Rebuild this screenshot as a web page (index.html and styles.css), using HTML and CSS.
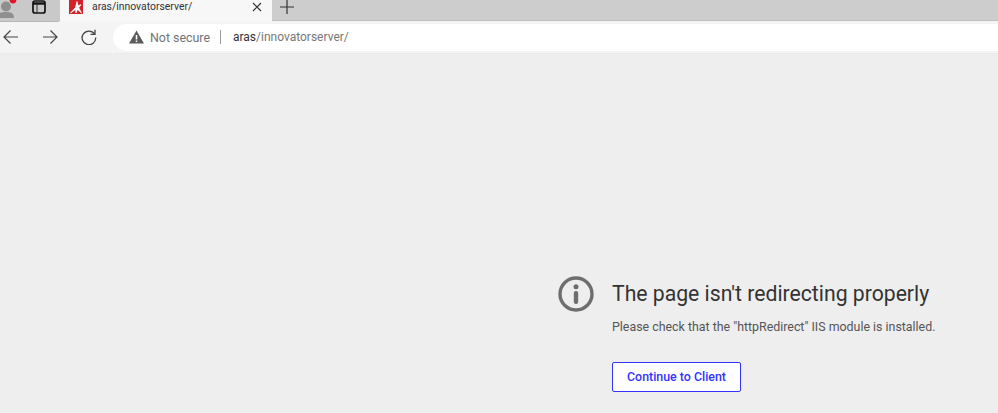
FILE: index.html
```html
<!DOCTYPE html>
<html lang="en">
<head>
<meta charset="utf-8">
<title>aras/innovatorserver/</title>
<link rel="stylesheet" href="styles.css">
</head>
<body>
<header class="chrome">
  <div class="tabstrip">
    <div class="window-tools">
      <div class="avatar">
        <svg width="22" height="21" viewBox="0 0 22 21"><circle cx="6" cy="6.500" r="5" fill="#8f8f8f"/><path d="M-3 18c0-4 3-6 9-6s8 2 8 6z" fill="#8f8f8f"/><circle cx="13" cy="0" r="3.400" fill="#e3132a"/></svg>
      </div>
      <svg class="tabs-icon" width="14" height="14" viewBox="0 0 14 14"><rect x="1" y="1" width="12" height="12" rx="2" fill="none" stroke="#111" stroke-width="1.700"/><path d="M1 3.500h12" stroke="#111" stroke-width="2.400"/><path d="M5 4v9" stroke="#333" stroke-width="1"/></svg>
    </div>
    <div class="tab">
      <svg class="favicon" width="14" height="14" viewBox="0 0 14 14"><rect width="14" height="14" fill="#d3222a"/><path d="M1.500 13 6.500 7.500 8 1.500l1 4.200 3-1-2.200 3 2.700 5.300-4-3.500-1.500 3.500-.4-3.600z" fill="#fff" stroke="#fff" stroke-width=".7" stroke-linejoin="round"/></svg>
      <span class="tab-title">aras/innovatorserver/</span>
      <svg class="tab-close" width="10" height="10" viewBox="0 0 10 10"><path d="M1 1l8 8M9 1l-8 8" stroke="#333" stroke-width="1.200"/></svg>
    </div>
    <div class="new-tab">
      <svg width="14" height="14" viewBox="0 0 14 14"><path d="M7 0v14M0 7h14" stroke="#333" stroke-width="1.200"/></svg>
    </div>
  </div>
  <div class="toolbar">
    <svg class="nav-icon" width="18" height="16" viewBox="0 0 18 16"><path d="M16 8H2M8.500 1.500 2 8l6.500 6.500" fill="none" stroke="#444" stroke-width="1.200"/></svg>
    <svg class="nav-icon" width="18" height="16" viewBox="0 0 18 16"><path d="M2 8h14M9.500 1.500 16 8l-6.500 6.500" fill="none" stroke="#444" stroke-width="1.200"/></svg>
    <svg class="nav-icon" width="16" height="16" viewBox="0 0 16 16"><path d="M13.500 5a6.800 6.800 0 1 0 1.200 3.500" fill="none" stroke="#444" stroke-width="1.300"/><path d="M14 .8V5.300H9.500" fill="none" stroke="#444" stroke-width="1.300"/></svg>
    <div class="omnibox">
      <svg class="warn" width="15" height="14" viewBox="0 0 15 14"><path fill-rule="evenodd" d="M7.500 0.500 15 13.500H0zM6.700 5v4.500h1.600V5zM6.700 10.500v1.500h1.600v-1.500z" fill="#5a5a5a"/></svg>
      <span class="security">Not secure</span>
      <span class="divider"></span>
      <span class="url"><span class="host">aras</span>/innovatorserver/</span>
    </div>
  </div>
</header>
<main class="page">
  <section class="notice">
    <svg class="info" width="36" height="36" viewBox="0 0 36 36"><circle cx="18" cy="18" r="16" fill="none" stroke="#6e6e6e" stroke-width="3.400"/><circle cx="18" cy="10.800" r="2.500" fill="#6e6e6e"/><rect x="15.800" y="15" width="4.400" height="13" rx="2" fill="#6e6e6e"/></svg>
    <div class="notice-body">
      <h1 class="title">The page isn't redirecting properly</h1>
      <p class="detail">Please check that the "httpRedirect" IIS module is installed.</p>
      <button class="continue" type="button">Continue to Client</button>
    </div>
  </section>
</main>
</body>
</html>
```
FILE: styles.css
```css
* { box-sizing: border-box; }
html, body { margin: 0; height: 100%; }
body {
  width: 998px;
  height: 413px;
  overflow: hidden;
  background: #eeeeee;
  font-family: Roboto, "Open Sans", sans-serif;
  display: flex;
  flex-direction: column;
}
.tabstrip {
  height: 21px;
  background: #cdcdcd;
  display: flex;
  border-bottom: 1px solid #c0c0c0;
}
.window-tools {
  width: 60px;
  height: 21px;
  background: #c9c9c9;
  border-bottom-right-radius: 3px;
  box-shadow: 0 1px 0 #b5b5b5;
  display: flex;
  align-items: flex-start;
}
.avatar { width: 32px; height: 21px; }
.avatar svg { display: block; }
.tabs-icon { margin-top: 0; }
.tab {
  width: 212px;
  height: 21px;
  background: #f7f7f7;
  display: flex;
  align-items: flex-start;
  padding-left: 9px;
}
.favicon { flex: none; }
.tab-title {
  margin-left: 9px;
  font-size: 10.400px;
  line-height: 13px;
  color: #333;
  flex: 1;
}
.tab-close { margin: 2px 10px 0 0; }
.new-tab {
  flex: 1;
  height: 21px;
  padding-left: 8px;
  display: flex;
}
.toolbar {
  height: 33px;
  background: #f4f4f4;
  display: flex;
  align-items: center;
  padding: 3px 0 3px 2px;
  border-bottom: 1px solid #eaeaea;
}
.nav-icon { flex: none; margin-right: 21px; }
.nav-icon:nth-child(3) { margin-right: 0; margin-left: 1px; }
.omnibox {
  flex: 1;
  height: 27px;
  margin-left: 16px;
  background: #fff;
  border-radius: 14px 0 0 14px;
  display: flex;
  align-items: center;
  padding-left: 16px;
  font-size: 12.400px;
}
.warn { flex: none; }
.security { margin-left: 6px; color: #6f7478; }
.divider { width: 1px; height: 14px; background: #9a9a9a; margin: 0 12px 0 10px; }
.url { color: #777; font-size: 12px; }
.host { color: #333; }
.page { flex: 1; padding: 221px 0 0 558px; }
.notice { display: flex; align-items: flex-start; }
.info { flex: none; margin-top: 1px; }
.notice-body { margin-left: 18px; }
.title {
  margin: 6px 0 0;
  font: 400 21.200px/26px Roboto, sans-serif;
  color: #333;
  white-space: nowrap;
}
.detail {
  margin: 12px 0 0;
  font: 400 12.400px/16px Roboto, sans-serif;
  color: #555;
  white-space: nowrap;
}
.continue {
  display: block;
  width: 129px;
  height: 30px;
  margin-top: 27px;
  padding: 0;
  background: #fff;
  border: 1px solid #3333ff;
  border-radius: 2px;
  color: #3333ff;
  font: 500 12.400px/16px Roboto, sans-serif;
}
```
